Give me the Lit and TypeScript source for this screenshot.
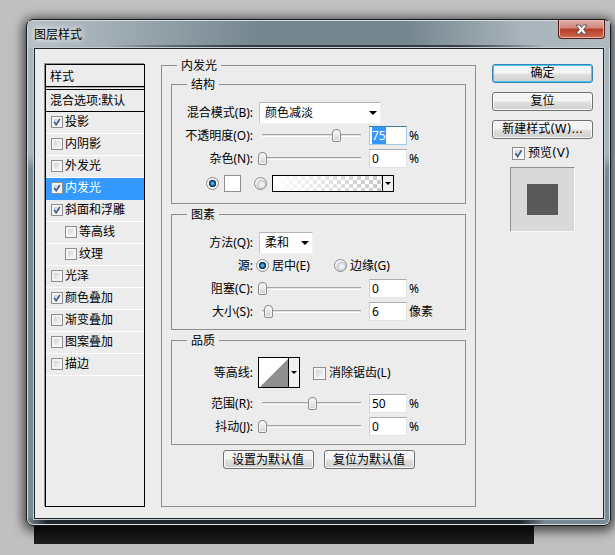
import { LitElement, html, css, svg } from "lit";
import { customElement, property, state } from "lit/decorators.js";
import { classMap } from "lit/directives/class-map.js";

const controls = css`
  * { box-sizing: border-box; }
  button, input, select {
    font: inherit;
    color: inherit;
    margin: 0;
  }
  input[type="checkbox"] {
    appearance: none;
    flex: none;
    width: 13px;
    height: 13px;
    border: 1px solid #8e8f8f;
    background: linear-gradient(135deg, #cfd3d8, #f6f6f6) content-box, #f4f4f4;
    padding: 2px;
  }
  input[type="radio"] {
    appearance: none;
    flex: none;
    width: 13px;
    height: 13px;
    border: 1px solid #8a8b8c;
    border-radius: 50%;
    background: radial-gradient(circle at 60% 60%, #eef0f2 0 20%, #c6cbd1 45%, #f4f4f4 60%);
  }
  input[type="radio"]:checked {
    background: radial-gradient(circle at 50% 50%, #5cc0e8 0 10%, #1b6a99 24%, #0e3350 44%, #f4f4f4 52%);
  }
  .tick {
    position: relative;
    display: inline-flex;
    flex: none;
  }
  .tick svg {
    position: absolute;
    inset: 0;
    width: 100%;
    height: 100%;
    pointer-events: none;
  }
  .push {
    height: 19px;
    padding: 0;
    border: 1px solid #707070;
    border-radius: 3px;
    background: linear-gradient(#f4f4f4 0 45%, #dfdfdf 55%, #cfcfcf);
    box-shadow: inset 0 0 0 1px #fafafa;
    line-height: 17px;
    white-space: nowrap;
  }
`;

const tickMark = svg`<path d="M3.4 6.2 5.6 9.4 9.6 3.2" fill="none" stroke="#44628f" stroke-width="1.8"/>`;

function checkbox(id: string, checked: boolean, onChange: (value: boolean) => void) {
  return html`<span class="tick">
    <input type="checkbox" id=${id} .checked=${checked}
      @change=${(e: Event) => onChange((e.target as HTMLInputElement).checked)} />
    ${checked ? html`<svg viewBox="0 0 13 13" aria-hidden="true">${tickMark}</svg>` : ""}
  </span>`;
}

interface Effect {
  name: string;
  on: boolean;
  child?: boolean;
}

@customElement("effect-list")
export class EffectList extends LitElement {
  static styles = [controls, css`
    :host {
      display: flex;
      flex-direction: column;
      border: 1px solid #000;
      box-shadow: -1px -1px 0 #8e8e8e;
    }
    .head, .blend {
      padding-left: 4px;
      border-bottom: 1px solid #000;
      white-space: nowrap;
    }
    .head { height: 22px; line-height: 24px; }
    .blend {
      height: 25px;
      padding-top: 2px;
      line-height: 23px;
      background: linear-gradient(#aaa 0 1px, #ececec 1px 2px, #000 2px 3px, transparent 3px);
    }
    ul { list-style: none; margin: 0; padding: 0; }
    li {
      display: flex;
      align-items: center;
      gap: 2px;
      height: 22px;
      padding: 0 0 1px 5px;
      border-bottom: 1px solid #fff;
    }
    li.child { padding-left: 19px; }
    li.selected { background: #3399ff; color: #fff; border-color: #3399ff; }
    li input[type="checkbox"] { width: 12px; height: 12px; }
    label { line-height: 20px; }
  `];

  @state() private effects: Effect[] = [
    { name: "投影", on: true },
    { name: "内阴影", on: false },
    { name: "外发光", on: false },
    { name: "内发光", on: true },
    { name: "斜面和浮雕", on: true },
    { name: "等高线", on: false, child: true },
    { name: "纹理", on: false, child: true },
    { name: "光泽", on: false },
    { name: "颜色叠加", on: true },
    { name: "渐变叠加", on: false },
    { name: "图案叠加", on: false },
    { name: "描边", on: false },
  ];
  @state() private selected = 3;

  private toggle(index: number, on: boolean) {
    this.effects = this.effects.map((e, i) => (i === index ? { ...e, on } : e));
    this.selected = index;
  }

  render() {
    return html`
      <div class="head">样式</div>
      <div class="blend">混合选项:默认</div>
      <ul>
        ${this.effects.map((e, i) => html`
          <li class=${classMap({ child: !!e.child, selected: i === this.selected })}>
            ${checkbox(`fx${i}`, e.on, (v) => this.toggle(i, v))}
            <label for=${`fx${i}`}>${e.name}</label>
          </li>`)}
      </ul>`;
  }
}

@customElement("slider-row")
export class SliderRow extends LitElement {
  static styles = [controls, css`
    :host { display: flex; align-items: center; height: 23px; }
    .name { flex: none; width: 81px; margin-right: 5px; text-align: right; white-space: nowrap; }
    .range {
      appearance: none;
      flex: none;
      width: 108px;
      height: 15px;
      background: linear-gradient(#a5a5a5 0 1px, #e2e2e2 1px 2px, #fff 2px 3px) no-repeat 4px 6px / 99px 3px;
    }
    .range::-webkit-slider-thumb {
      appearance: none;
      width: 9px;
      height: 13px;
      border: 1px solid #8a8a8a;
      border-radius: 4px 4px 2px 2px;
      background: linear-gradient(#fafafa, #d2d2d2);
      box-shadow: inset 0 0 0 1px #f6f6f6;
    }
    .value {
      width: 38px;
      height: 19px;
      margin: 0 3px;
      padding: 0 2px;
      border: 1px solid #e3e3e3;
      border-top-color: #abadb3;
      border-left-color: #d0d2d8;
      background: #fff;
      outline: none;
      line-height: 16px;
    }
    .value:focus {
      border-color: #a4c9e3;
      border-top-color: #3d7bad;
    }
    .value::selection { background: #3399ff; color: #fff; }
    .unit { margin-left: -1px; white-space: nowrap; }
  `];

  @property() name = "";
  @property() unit = "%";
  @property({ type: Number }) value = 0;
  @property({ type: Boolean }) active = false;

  firstUpdated() {
    if (this.active) {
      const box = this.renderRoot.querySelector<HTMLInputElement>(".value")!;
      box.focus();
      box.select();
    }
  }

  private edit(e: Event) {
    this.value = Number((e.target as HTMLInputElement).value) || 0;
  }

  render() {
    return html`
      <label class="name" for="value">${this.name}:</label>
      <input class="range" type="range" min="0" max="100" aria-label=${this.name}
        .value=${String(this.value)} @input=${this.edit} />
      <input class="value" id="value" type="text" .value=${String(this.value)} @change=${this.edit} />
      <span class="unit">${this.unit}</span>`;
  }
}

@customElement("glow-settings")
export class GlowSettings extends LitElement {
  static styles = [controls, css`
    :host { display: block; min-width: 0; }
    fieldset {
      margin: 0;
      padding: 0;
      border: 1px solid #8f8f8f;
      min-width: 0;
    }
    legend { height: 16px; line-height: 18px; padding: 0 4px; margin-left: 15px; }
    .outer { height: 100%; padding: 1px 0 37px; }
    .outer > fieldset { margin: 2px 9px 0; padding: 9px 0 6px; }
    .row { display: flex; align-items: center; height: 23px; }
    .row.fill { height: 27px; padding-left: 34px; }
    .row.contour { height: 35px; align-items: flex-start; line-height: 32px; }
    .name { flex: none; width: 81px; margin-right: 5px; text-align: right; white-space: nowrap; }
    .source .name { margin-right: 3px; }
    .pick { position: relative; display: flex; margin-left: 1px; }
    .pick select {
      appearance: none;
      height: 22px;
      padding: 0 5px;
      border: 1px solid #f2f2f2;
      border-top-color: #b4b4b4;
      border-left-color: #c8c8c8;
      border-radius: 0;
      background: #fff;
    }
    .wide select { width: 122px; }
    .slim select { width: 54px; }
    .pick svg { position: absolute; right: 4px; top: 9px; pointer-events: none; }
    .color {
      width: 17px;
      height: 17px;
      margin: 0 13px 0 5px;
      padding: 0;
      border: 1px solid #8f8f8f;
      background: #fff;
    }
    .gradient {
      display: flex;
      width: 122px;
      height: 17px;
      margin-left: 5px;
      padding: 0;
      border: 1px solid #000;
      background: #f0f0f0;
    }
    .ramp {
      flex: 1;
      height: 15px;
      background:
        linear-gradient(90deg, #fff, rgba(255, 255, 255, 0)),
        repeating-conic-gradient(#c8c8c8 0 25%, #fff 0 50%) 0 0 / 8px 8px;
    }
    .drop {
      display: grid;
      place-items: center;
      width: 11px;
      align-self: stretch;
      border-left: 1px solid #000;
    }
    .option { display: inline-flex; align-items: center; gap: 3px; white-space: nowrap; }
    .center { width: 78px; }
    .curve {
      display: flex;
      width: 42px;
      height: 31px;
      margin-right: 13px;
      padding: 0;
      border: 1px solid #000;
      background: #f0f0f0;
    }
    .actions { display: flex; justify-content: center; gap: 10px; margin-top: 5px; }
    .actions .push { width: 91px; }
  `];

  @state() private antialias = false;

  private arrow(size: number) {
    return html`<svg width=${size} height=${Math.ceil(size / 2)} viewBox="0 0 8 4" aria-hidden="true">
      <path d="M0 0H8L4 4Z" fill="#000" /></svg>`;
  }

  render() {
    return html`
      <fieldset class="outer">
        <legend>内发光</legend>
        <fieldset>
          <legend>结构</legend>
          <div class="row">
            <label class="name" for="mode">混合模式(B):</label>
            <span class="pick wide"><select id="mode"><option>颜色减淡</option></select>${this.arrow(8)}</span>
          </div>
          <slider-row name="不透明度(O)" value="75" active></slider-row>
          <slider-row name="杂色(N)" value="0"></slider-row>
          <div class="row fill">
            <input type="radio" name="fill" aria-label="颜色" checked />
            <button class="color" aria-label="颜色"></button>
            <input type="radio" name="fill" aria-label="渐变" />
            <button class="gradient" aria-label="渐变">
              <span class="ramp"></span><span class="drop">${this.arrow(6)}</span>
            </button>
          </div>
        </fieldset>
        <fieldset>
          <legend>图素</legend>
          <div class="row">
            <label class="name" for="method">方法(Q):</label>
            <span class="pick slim"><select id="method"><option>柔和</option></select>${this.arrow(8)}</span>
          </div>
          <div class="row source">
            <span class="name">源:</span>
            <label class="option center"><input type="radio" name="source" checked />居中(E)</label>
            <label class="option"><input type="radio" name="source" />边缘(G)</label>
          </div>
          <slider-row name="阻塞(C)" value="0"></slider-row>
          <slider-row name="大小(S)" value="6" unit="像素"></slider-row>
        </fieldset>
        <fieldset>
          <legend>品质</legend>
          <div class="row contour">
            <span class="name">等高线:</span>
            <button class="curve" aria-label="等高线">
              <svg width="29" height="29" aria-hidden="true">
                <rect width="29" height="29" fill="#fff" /><path d="M1 29 29 1V29Z" fill="#8f8f8f" />
              </svg>
              <span class="drop">${this.arrow(6)}</span>
            </button>
            <span class="option">
              ${checkbox("aa", this.antialias, (v) => (this.antialias = v))}
              <label for="aa">消除锯齿(L)</label>
            </span>
          </div>
          <slider-row name="范围(R)" value="50"></slider-row>
          <slider-row name="抖动(J)" value="0"></slider-row>
        </fieldset>
        <div class="actions">
          <button class="push">设置为默认值</button>
          <button class="push">复位为默认值</button>
        </div>
      </fieldset>`;
  }
}

@customElement("app-root")
export class AppRoot extends LitElement {
  static styles = [controls, css`
    :host {
      display: block;
      box-sizing: border-box;
      min-height: 100vh;
      padding: 19px 4px 0 26px;
      background: #c0c0c0;
      color: #000;
      font: 12px/16px "Noto Sans", "Noto Sans CJK SC", sans-serif;
      overflow: hidden;
    }
    .window {
      position: relative;
      padding: 0 6px 6px 7px;
      border: 1px solid #14181b;
      border-radius: 7px;
      background:
        linear-gradient(90deg, #788a94, #20282b 20px calc(100% - 90px), #788a94 calc(100% - 65px)) no-repeat 0 100% / 100% 7px,
        linear-gradient(90deg, #b4bec4, #a0acb4 15%, #75868f 40%, #75868f 65%, #a9b4bb 85%, #b0bac0) no-repeat 0 0 / 100% 22px,
        linear-gradient(#a9b5bc 0 135px, #788a94 150px);
      box-shadow: inset 0 0 0 1px #d5dde1, 0 2px 11px 3px rgba(0, 0, 0, 0.65);
    }
    .title {
      display: flex;
      justify-content: space-between;
      height: 28px;
      margin: 0 -6px;
      padding: 0 6px;
      background:
        linear-gradient(90deg, transparent 80px, rgba(38, 46, 52, 0.75) 220px calc(100% - 160px), transparent calc(100% - 65px)) no-repeat 0 100% / 100% 3px,
        linear-gradient(90deg, transparent 80px, rgba(60, 72, 80, 0.5) 220px calc(100% - 160px), transparent calc(100% - 65px)) no-repeat 0 25px / 100% 3px,
        linear-gradient(90deg, #b4bec4, #a0acb4 15%, #75868f 40%, #75868f 65%, #a9b4bb 85%, #b0bac0) no-repeat 0 1px / 100% 100%;
    }
    h1 { margin: 0; font-size: 12px; font-weight: 400; line-height: 29px; text-shadow: 0 0 6px #fff, 0 0 8px #fff; }
    .close {
      display: grid;
      place-items: center;
      width: 47px;
      height: 19px;
      margin-right: -1px;
      padding: 0;
      border: 1px solid #571b17;
      border-top: 0;
      border-radius: 0 0 4px 4px;
      background: linear-gradient(#e3b0a8, #d08579 45%, #b33a28 50%, #d0694f);
      box-shadow: inset 0 0 0 1px #e8b8ae;
    }
    .client {
      display: grid;
      grid-template-columns: 100px minmax(0, 1fr) 101px;
      column-gap: 16px;
      padding: 15px 10px 11px;
      border: 1px solid #1d2327;
      background: #ececec;
      box-shadow: 0 0 0 1px #c3ccd1;
    }
    glow-settings { margin-top: -7px; }
    .side { display: flex; flex-direction: column; font-family: "DejaVu Sans", "Noto Sans CJK SC", sans-serif; }
    .side .push { margin-bottom: 9px; }
    .side .ok { border-color: #3c7fb1; box-shadow: inset 0 0 0 1px #45c8f5; }
    .preview-toggle { display: flex; align-items: center; gap: 3px; padding-left: 20px; height: 16px; margin-top: -3px; }
    .preview {
      display: grid;
      place-items: center;
      align-self: center;
      width: 65px;
      height: 65px;
      margin-top: 6px;
      border: 1px solid #f8f8f8;
      border-top-color: #8f8f8f;
      border-left-color: #8f8f8f;
      background: #d9d9d9;
    }
    .swatch { width: 31px; height: 31px; background: #595959; }
    .strip { height: 18px; margin: 0 77px 0 8px; background: linear-gradient(#111, #1e1e1e); }
  `];

  @state() private preview = true;

  render() {
    return html`
      <section class="window" role="dialog" aria-labelledby="title">
        <header class="title">
          <h1 id="title">图层样式</h1>
          <button class="close" aria-label="关闭">
            <svg width="13" height="11" viewBox="0 0 13 11" aria-hidden="true">
              <path d="M1 1H4.6L6.5 3.4 8.4 1H12L8.6 5.5 12 10H8.4L6.5 7.6 4.6 10H1L4.4 5.5Z"
                fill="#fff" stroke="#5f5558" stroke-width="1" />
            </svg>
          </button>
        </header>
        <div class="client">
          <effect-list></effect-list>
          <glow-settings></glow-settings>
          <div class="side">
            <button class="push ok">确定</button>
            <button class="push">复位</button>
            <button class="push">新建样式(W)...</button>
            <div class="preview-toggle">
              ${checkbox("preview", this.preview, (v) => (this.preview = v))}
              <label for="preview">预览(V)</label>
            </div>
            <div class="preview"><div class="swatch"></div></div>
          </div>
        </div>
      </section>
      <div class="strip"></div>`;
  }
}
